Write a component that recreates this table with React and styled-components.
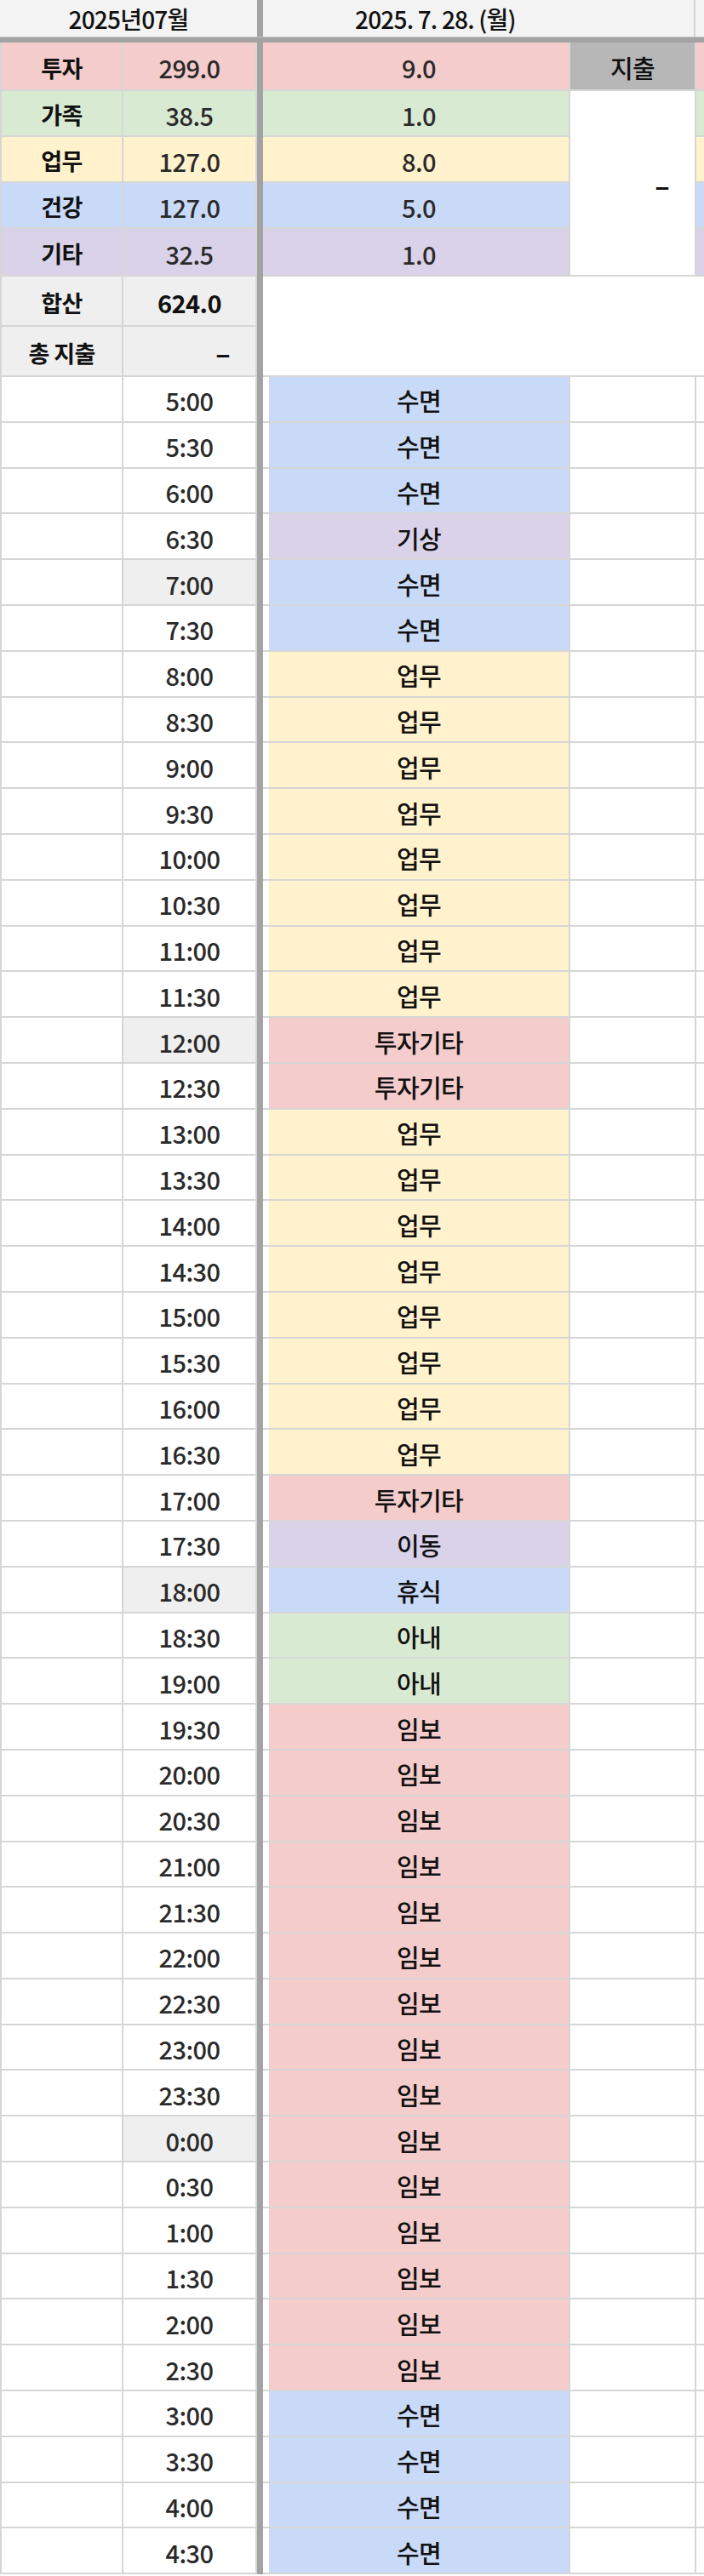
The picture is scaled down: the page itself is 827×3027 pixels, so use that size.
import React from "react";
import styled, { createGlobalStyle } from "styled-components";

const GlobalStyle = createGlobalStyle`
  body {
    margin: 0;
    background: #fff;
    font-family: "Noto Sans CJK KR", "Noto Sans", sans-serif;
    color: #222;
  }
`;

const COLS = "145px 157px 7px 7px 354px 148px 1fr";
const LINE = "#d6d6d6";
const BAR = "#a3a3a3";

const TONES = {
  red: "#f4cccc",
  green: "#d9ead3",
  yellow: "#fff2cc",
  blue: "#c9daf8",
  purple: "#d9d2e9",
  gray: "#efefef",
  dark: "#b7b7b7",
  white: "#ffffff",
};

const Sheet = styled.div`
  width: 827px;
  overflow: hidden;
`;

const HeaderRow = styled.div`
  display: grid;
  grid-template-columns: 302px 7px 1fr;
  height: 43px;
  background: #f3f3f3;
`;

const HeadCell = styled.div`
  display: flex;
  align-items: center;
  justify-content: ${(p) => (p.$left ? "flex-start" : "center")};
  padding-left: ${(p) => p.$pad || 0}px;
  font-size: 28px;
  font-weight: 500;
  color: #111;
  letter-spacing: -0.8px;
  border-right: ${(p) => (p.$edge ? `2px solid ${LINE}` : "none")};
`;

const HeadSplit = styled.div`
  display: grid;
  grid-template-columns: 1fr 10px;
`;

const VBar = styled.div`
  background: ${BAR};
  grid-row: ${(p) => p.$rows || "auto"};
`;

const HBar = styled.div`
  height: 7px;
  background: ${BAR};
  border-top: 1px solid #c4c4c4;
  box-sizing: border-box;
`;

const Summary = styled.div`
  display: grid;
  grid-template-columns: ${COLS};
  grid-template-rows: 57px 54px 54px 54px 56px 59px 59px;
`;

const Cell = styled.div`
  box-sizing: border-box;
  display: flex;
  align-items: center;
  justify-content: ${(p) => p.$align || "center"};
  padding-right: ${(p) => p.$padRight || 0}px;
  padding-top: 3px;
  background: ${(p) => TONES[p.$tone || "white"]};
  border-right: ${(p) => (p.$noRight ? "none" : `2px solid ${LINE}`)};
  border-bottom: 2px solid ${LINE};
  border-left: ${(p) => (p.$first ? `2px solid ${LINE}` : "none")};
  grid-row: ${(p) => (p.$rowSpan ? `span ${p.$rowSpan}` : "auto")};
  grid-column: ${(p) => (p.$colSpan ? `span ${p.$colSpan}` : "auto")};
  font-size: ${(p) => p.$size || 29}px;
  font-weight: ${(p) => (p.$bold ? 700 : 500)};
  color: ${(p) => (p.$dim ? "#2a2a2a" : "#111")};
  letter-spacing: -0.6px;
  white-space: nowrap;
`;

const TimeRow = styled.div`
  display: grid;
  grid-template-columns: ${COLS};
  height: 53.8px;
`;

const summary = [
  { label: "투자", total: "299.0", today: "9.0", tone: "red" },
  { label: "가족", total: "38.5", today: "1.0", tone: "green" },
  { label: "업무", total: "127.0", today: "8.0", tone: "yellow" },
  { label: "건강", total: "127.0", today: "5.0", tone: "blue" },
  { label: "기타", total: "32.5", today: "1.0", tone: "purple" },
];

const toneOf = {
  수면: "blue",
  휴식: "blue",
  기상: "purple",
  이동: "purple",
  업무: "yellow",
  투자기타: "red",
  임보: "red",
  아내: "green",
};

const plan = [
  ["수면", 3],
  ["기상", 1],
  ["수면", 2],
  ["업무", 8],
  ["투자기타", 2],
  ["업무", 8],
  ["투자기타", 1],
  ["이동", 1],
  ["휴식", 1],
  ["아내", 2],
  ["임보", 15],
  ["수면", 4],
];

const marked = ["7:00", "12:00", "18:00", "0:00"];

const slots = plan
  .flatMap(([name, n]) => Array(n).fill(name))
  .map((act, i) => {
    const mins = (5 * 60 + i * 30) % (24 * 60);
    const time = `${Math.floor(mins / 60)}:${mins % 60 === 0 ? "00" : "30"}`;
    return { time, act, mark: marked.includes(time) };
  });

export default function App() {
  return (
    <>
      <GlobalStyle />
      <Sheet>
        <HeaderRow>
          <HeadCell>2025년07월</HeadCell>
          <VBar />
          <HeadSplit>
            <HeadCell $left $pad={108} $edge>
              2025. 7. 28. (월)
            </HeadCell>
            <div />
          </HeadSplit>
        </HeaderRow>
        <HBar />

        <Summary>
          {summary.map((row, i) => (
            <React.Fragment key={row.label}>
              <Cell $tone={row.tone} $bold $size={27} $first>
                {row.label}
              </Cell>
              <Cell $tone={row.tone} $dim>
                {row.total}
              </Cell>
              {i === 0 && <VBar $rows="span 7" />}
              <Cell $tone={row.tone} $noRight />
              <Cell $tone={row.tone} $dim>
                {row.today}
              </Cell>
              {i === 0 && <Cell $tone="dark">지출</Cell>}
              {i === 1 && (
                <Cell $rowSpan={4} $align="flex-end" $padRight={30} $size={32} $bold>
                  –
                </Cell>
              )}
              <Cell $tone={row.tone} $noRight />
            </React.Fragment>
          ))}
          <Cell $tone="gray" $bold $size={27} $first>
            합산
          </Cell>
          <Cell $tone="gray" $bold>
            624.0
          </Cell>
          <Cell $colSpan={4} $rowSpan={2} $noRight />
          <Cell $tone="gray" $bold $size={27} $first>
            총 지출
          </Cell>
          <Cell $tone="gray" $align="flex-end" $padRight={30} $bold $size={32}>
            –
          </Cell>
        </Summary>

        {slots.map((s, i) => (
          <TimeRow key={i}>
            <Cell $first />
            <Cell $tone={s.mark ? "gray" : "white"} $dim>
              {s.time}
            </Cell>
            <VBar />
            <Cell $noRight />
            <Cell $tone={toneOf[s.act]}>{s.act}</Cell>
            <Cell />
            <Cell $noRight />
          </TimeRow>
        ))}
      </Sheet>
    </>
  );
}
